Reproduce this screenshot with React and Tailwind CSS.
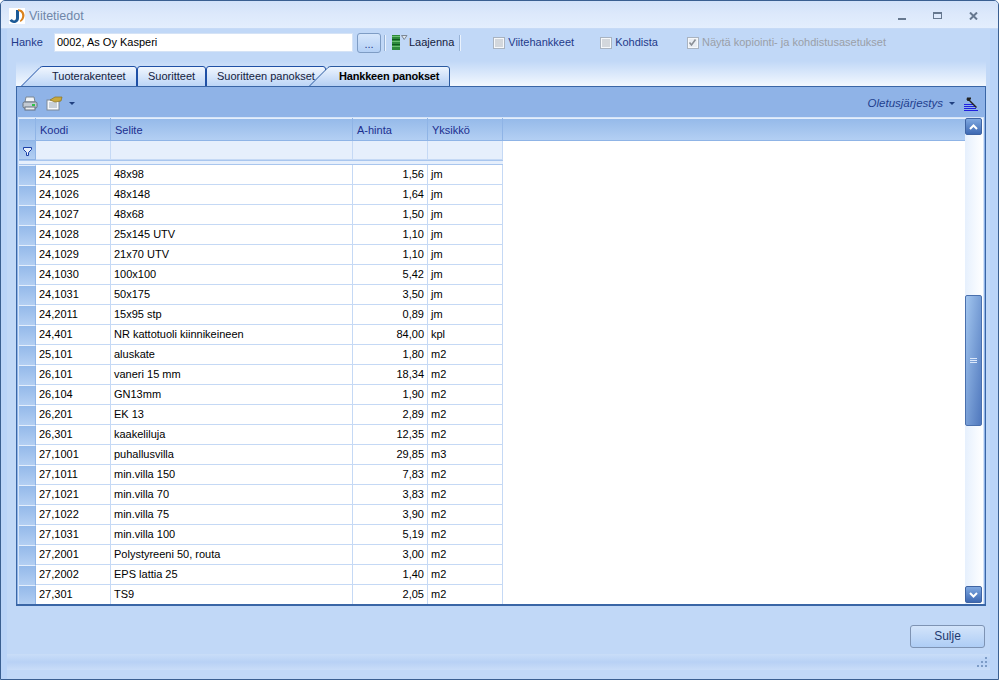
const ROWS = [
  ['24,1025', '48x98', '1,56', 'jm'],
  ['24,1026', '48x148', '1,64', 'jm'],
  ['24,1027', '48x68', '1,50', 'jm'],
  ['24,1028', '25x145 UTV', '1,10', 'jm'],
  ['24,1029', '21x70 UTV', '1,10', 'jm'],
  ['24,1030', '100x100', '5,42', 'jm'],
  ['24,1031', '50x175', '3,50', 'jm'],
  ['24,2011', '15x95 stp', '0,89', 'jm'],
  ['24,401', 'NR kattotuoli kiinnikeineen', '84,00', 'kpl'],
  ['25,101', 'aluskate', '1,80', 'm2'],
  ['26,101', 'vaneri 15 mm', '18,34', 'm2'],
  ['26,104', 'GN13mm', '1,90', 'm2'],
  ['26,201', 'EK 13', '2,89', 'm2'],
  ['26,301', 'kaakeliluja', '12,35', 'm2'],
  ['27,1001', 'puhallusvilla', '29,85', 'm3'],
  ['27,1011', 'min.villa 150', '7,83', 'm2'],
  ['27,1021', 'min.villa 70', '3,83', 'm2'],
  ['27,1022', 'min.villa 75', '3,90', 'm2'],
  ['27,1031', 'min.villa 100', '5,19', 'm2'],
  ['27,2001', 'Polystyreeni 50, routa', '3,00', 'm2'],
  ['27,2002', 'EPS lattia 25', '1,40', 'm2'],
  ['27,301', 'TS9', '2,05', 'm2'],
]

function Logo() {
  return (
    <svg width="16" height="16" viewBox="0 0 16 16" className="bg-white">
      <path d="M7 2 H10 V10 C10 13.5 7.5 15 5 15 C3 15 1.5 14 0.5 12.5 L3 11 C3.5 12 4.2 12.4 5 12.4 C6.2 12.4 7 11.6 7 10 Z" fill="#1c5a96" />
      <path d="M9 1.2 C13 1 15.5 4 15.5 7.5 C15.5 10 14 12.5 11.5 14 L10.8 12.8 C12.5 11.2 13.2 9.5 13.2 7.6 C13.2 5 11.5 3.2 9 3 Z" fill="#d9821e" />
    </svg>
  )
}

function WindowButtons() {
  return (
    <div className="flex items-center gap-[27px] mr-[20px]">
      <div className="w-[8px] h-[8px] flex items-end"><div className="w-[8px] h-[2px] bg-[#66788f]" /></div>
      <div className="w-[9px] h-[7px] border border-[#66788f] border-t-[2px]" />
      <svg width="9" height="8" viewBox="0 0 9 8"><path d="M1 0.5 L8 7.5 M8 0.5 L1 7.5" stroke="#66788f" strokeWidth="2" /></svg>
    </div>
  )
}

function StackIcon() {
  return (
    <svg width="17" height="17" viewBox="0 0 17 17">
      <rect x="0" y="1" width="8" height="15" fill="#2e8b3c" />
      <path d="M0 5.5 H8 M0 10.5 H8" stroke="#0f5c1e" strokeWidth="1" />
      <path d="M0 2.5 H8 M0 7.5 H8 M0 12.5 H8" stroke="#6cc070" strokeWidth="1" />
      <path d="M9.5 1.5 H15 L12.2 5.5 Z" fill="#dfe6ee" stroke="#7c8794" strokeWidth="1" />
    </svg>
  )
}

function Check({ checked, disabled, label, className }) {
  return (
    <div className={`flex items-center ${className}`}>
      <div className={`w-[12px] h-[12px] border border-[#a9b3c0] bg-[#e9edf2] flex items-center justify-center shadow-[inset_0_0_0_1px_#f6f8fa] ${checked ? 'bg-[#dfe4ea]' : ''}`}>
        {checked && (
          <svg width="9" height="9" viewBox="0 0 9 9"><path d="M1.5 4.5 L3.5 7 L7.5 1.5" fill="none" stroke="#8a8f96" strokeWidth="1.6" /></svg>
        )}
        {!checked && <div className="w-[8px] h-[8px] bg-[#d3d7dc]" />}
      </div>
      <span className={`ml-[3px] ${disabled ? 'text-[#9a9fa8]' : 'text-[#1f3a8a]'}`}>{label}</span>
    </div>
  )
}

function Tab({ label, width, slant, active, className }) {
  const w = width
  const d = slant
    ? `M0.5 20 L19 1.5 Q20 0.5 22 0.5 H${w - 3} Q${w - 0.5} 0.5 ${w - 0.5} 3 V20`
    : `M0.5 20 V3 Q0.5 0.5 3 0.5 H${w - 3} Q${w - 0.5} 0.5 ${w - 0.5} 3 V20`
  return (
    <div className={`relative h-[20px] shrink-0 ${className}`} style={{ width: w }}>
      <svg width={w} height="20" className="absolute inset-0">
        <defs>
          <linearGradient id={`tab-${w}`} x1="0" y1="0" x2="0" y2="1">
            <stop offset="0" stopColor={active ? '#eef5fe' : '#f2f7fe'} />
            <stop offset="1" stopColor={active ? '#b5cff3' : '#bcd5f6'} />
          </linearGradient>
        </defs>
        <path d={d} fill={`url(#tab-${w})`} stroke={active ? '#2a5aa0' : '#1f50a6'} strokeWidth="1" />
      </svg>
      <span className={`absolute top-[3px] whitespace-nowrap leading-[15px] ${active ? 'left-[30px] font-bold text-black tracking-[-0.18px]' : slant ? 'left-[31px] text-[#14213d]' : 'left-[11px] text-[#14213d]'}`}>
        {label}
      </span>
    </div>
  )
}

function PrinterIcon() {
  return (
    <svg width="16" height="15" viewBox="0 0 16 15">
      <path d="M4 1 H12 L13 6 H3 Z" fill="#f4f6f8" stroke="#7b8794" strokeWidth="1" />
      <rect x="1" y="6" width="14" height="6" rx="1.5" fill="#c3cad3" stroke="#66717e" strokeWidth="1" />
      <rect x="3" y="11" width="10" height="3" fill="#eef0f3" stroke="#66717e" strokeWidth="1" />
      <rect x="10" y="8" width="3" height="2" fill="#2fc24a" />
    </svg>
  )
}

function NoteIcon() {
  return (
    <svg width="17" height="15" viewBox="0 0 17 15">
      <rect x="1" y="4" width="12" height="10" fill="#f7f9fb" stroke="#7f8a97" strokeWidth="1" />
      <path d="M3 7 H11 M3 9 H11 M3 11 H11" stroke="#9aa7b5" strokeWidth="1" />
      <path d="M4 4 L9 1 L16 1 L15 5 L9 6 Z" fill="#c9a93e" stroke="#8a7320" strokeWidth="0.7" />
    </svg>
  )
}

function Caret({ className }) {
  return <div className={`w-0 h-0 border-l-[3px] border-r-[3px] border-t-[3px] border-l-transparent border-r-transparent border-t-[#1f3f7f] ${className}`} />
}

function SortIcon() {
  return (
    <svg width="15" height="14" viewBox="0 0 15 14">
      <path d="M0 7.5 H9 M0 9.5 H11 M0 11.5 H12 M0 13.5 H14" stroke="#1f1fe0" strokeWidth="1" />
      <path d="M3 0.5 H7 V2 L6 3 L13 10 L12 11 L5 4 L3.5 4 L2.5 2.5 Z" fill="#222" />
    </svg>
  )
}

function FunnelIcon() {
  return (
    <svg width="9" height="9" viewBox="0 0 9 9">
      <path d="M0.5 0.5 H8.5 V2.5 L5.5 5.5 V8.5 H3.5 V5.5 L0.5 2.5 Z" fill="#e6effc" stroke="#1b3fa6" strokeWidth="1" />
    </svg>
  )
}

function ScrollButton({ down }) {
  return (
    <div className="w-[17px] h-[17px] rounded-[2px] border border-[#3f64a3] bg-gradient-to-b from-[#7fa8e0] to-[#3e69b3] flex items-center justify-center">
      <svg width="9" height="6" viewBox="0 0 9 6">
        <path d={down ? 'M1 1 L4.5 4.5 L8 1' : 'M1 5 L4.5 1.5 L8 5'} fill="none" stroke="#fff" strokeWidth="2" />
      </svg>
    </div>
  )
}

const cellW = ['w-[75px]', 'w-[242px]', 'w-[75px]', 'w-[75px]']

function HeaderRow() {
  return (
    <div className="flex h-[23px] shrink-0 bg-gradient-to-b from-[#94b9e9] to-[#b3cff3] border-b border-[#8fb4e6] text-[#1c2f8f] shadow-[inset_0_1px_0_#e4eefc]">
      <div className="w-[17px] border-r border-[#8fb4e6]" />
      {['Koodi', 'Selite', 'A-hinta', 'Yksikkö'].map((h, i) => (
        <div key={h} className={`${cellW[i]} pl-[4px] pt-[2px] leading-[21px] border-r border-[#8fb4e6]`}>{h}</div>
      ))}
    </div>
  )
}

function FilterRow() {
  return (
    <div className="flex h-[19px] shrink-0">
      <div className="w-[17px] bg-gradient-to-b from-[#94b9e9] to-[#b3cff3] border-r border-b border-[#8fb4e6] flex items-center justify-center pt-[3px]">
        <FunnelIcon />
      </div>
      {cellW.map((w, i) => (
        <div key={i} className={`${w} bg-[#e6effc] border-r border-b border-[#c5d9f5]`} />
      ))}
    </div>
  )
}

function DataRow({ row }) {
  return (
    <div className="flex h-[20px] shrink-0 text-black leading-[19px]">
      <div className="w-[17px] bg-gradient-to-b from-[#94b9e9] to-[#b3cff3] border-r border-[#8fb4e6] border-t border-t-[#e4eefc]" />
      <div className={`${cellW[0]} pl-[3px] border-r border-b border-[#c5d9f5]`}>{row[0]}</div>
      <div className={`${cellW[1]} pl-[3px] border-r border-b border-[#c5d9f5]`}>{row[1]}</div>
      <div className={`${cellW[2]} pr-[3px] text-right border-r border-b border-[#c5d9f5]`}>{row[2]}</div>
      <div className={`${cellW[3]} pl-[3px] border-r border-b border-[#c5d9f5]`}>{row[3]}</div>
    </div>
  )
}

export default function App() {
  return (
    <div className="w-[999px] h-[680px] flex flex-col bg-[#bad4f8] border border-[#3a5f91] rounded-t-[5px] overflow-hidden text-[11px] font-['Liberation_Sans',sans-serif]">
      {/* title bar */}
      <div className="h-[28px] shrink-0 flex items-center justify-between pl-[8px] pt-[2px] bg-gradient-to-b from-[#d2e2f9] via-[#dde9fb] to-[#e3eefd] border-b border-[#c6daf6]">
        <div className="flex items-center gap-[4px]">
          <Logo />
          <span className="text-[12.5px] text-[#6f86a8] pt-[1px]">Viitetiedot</span>
        </div>
        <WindowButtons />
      </div>

      <div className="flex-1 flex flex-col ml-[6px] mr-[8px] bg-[#c1d8f7] min-h-0">
        {/* hanke row */}
        <div className="h-[32px] shrink-0 flex items-center pl-[4px] pb-[5px]">
          <span className="w-[43px] text-[#1f3a8a] text-[11px]">Hanke</span>
          <div className="w-[299px] h-[19px] bg-white border border-[#d5e3f6] pl-[2px] text-[11px] leading-[17px] text-black">0002, As Oy Kasperi</div>
          <div className="w-[24px] h-[20px] ml-[4px] rounded-[3px] border border-[#7e9cc4] bg-gradient-to-b from-[#d6e6fb] to-[#b4d0f5] text-center text-[#1f3a8a] leading-[20px]">...</div>
          <div className="w-[2px] h-[16px] ml-[3px] bg-[#eaf2fd] border-l border-[#98b3d6]" />
          <div className="ml-[6px] flex items-center"><StackIcon /></div>
          <span className="text-[11px] text-[#14213d]">Laajenna</span>
          <div className="w-[2px] h-[16px] ml-[5px] bg-[#eaf2fd] border-l border-[#98b3d6]" />
          <Check label="Viitehankkeet" className="ml-[32px]" />
          <Check label="Kohdista" className="ml-[26px]" />
          <Check checked disabled label="Näytä kopiointi- ja kohdistusasetukset" className="ml-[29px]" />
        </div>

        {/* tab strip */}
        <div className="h-[25px] shrink-0 ml-[9px] mr-[4px] flex items-end pl-[5px] bg-gradient-to-b from-[#c1d8f7] to-[#f3f8fe]">
          <Tab label="Tuoterakenteet" width={116} slant />
          <Tab label="Suoritteet" width={69} />
          <Tab label="Suoritteen panokset" width={120} />
          <Tab label="Hankkeen panokset" width={141} slant active className="-ml-[17px]" />
        </div>

        {/* panel */}
        <div className="h-[520px] shrink-0 ml-[9px] mr-[4px] flex flex-col border border-[#3a66a6] border-b-2 bg-[#8fb3e7]">
          <div className="h-[30px] shrink-0 flex items-center pl-[5px] pr-[6px] pt-[3px]">
            <PrinterIcon />
            <div className="ml-[8px]"><NoteIcon /></div>
            <Caret className="ml-[6px]" />
            <span className="ml-auto italic text-[11.5px] text-[#1f3f8f]">Oletusjärjestys</span>
            <Caret className="ml-[6px] mr-[9px]" />
            <SortIcon />
          </div>
          <div className="flex-1 flex min-h-0 ml-[1px] mr-[1px] border border-[#d5e4f8] border-b-0 bg-white">
            <div className="flex-1 flex flex-col min-w-0 overflow-hidden">
              <HeaderRow />
              <FilterRow />
              <div className="w-[484px] h-[5px] shrink-0 bg-[#e6effc] border-y border-[#a9c6ee]" />
              <div className="w-[484px] flex-1 min-h-0 overflow-hidden">
                {ROWS.map((r) => <DataRow key={r[0]} row={r} />)}
              </div>
            </div>
            <div className="w-[18px] shrink-0 flex flex-col pb-[1px] bg-gradient-to-r from-[#e6f0fd] to-white">
              <ScrollButton />
              <div className="flex-1 pt-[160px] pb-[160px]">
                <div className="w-[17px] h-full rounded-[2px] border border-[#4a70ad] bg-gradient-to-br from-[#a3c6ef] to-[#5078bd] flex flex-col items-center justify-center gap-[1px]">
                  <div className="w-[7px] h-px bg-[#dce8fa]" />
                  <div className="w-[7px] h-px bg-[#dce8fa]" />
                  <div className="w-[7px] h-px bg-[#dce8fa]" />
                </div>
              </div>
              <ScrollButton down />
            </div>
          </div>
        </div>

        {/* footer */}
        <div className="flex-1 flex flex-col min-h-0">
          <div className="flex justify-end mr-[5px] mt-[19px]">
            <div className="w-[75px] h-[23px] rounded-[3px] border border-[#7e93b3] bg-gradient-to-b from-[#d3e4fa] to-[#aecdf5] text-center text-[12px] leading-[21px] text-[#1f3a6f]">Sulje</div>
          </div>
          <div className="h-[16px] mt-[6px] flex items-center justify-end pr-[2px] bg-gradient-to-b from-[#c9ddf8] via-[#b8d1f5] to-[#c9ddf8]">
            <svg width="11" height="11" viewBox="0 0 11 11" fill="#7d9cc7">
              <rect x="8" y="0" width="2" height="2" />
              <rect x="4" y="4" width="2" height="2" /><rect x="8" y="4" width="2" height="2" />
              <rect x="0" y="8" width="2" height="2" /><rect x="4" y="8" width="2" height="2" /><rect x="8" y="8" width="2" height="2" />
            </svg>
          </div>
        </div>
      </div>
    </div>
  )
}
